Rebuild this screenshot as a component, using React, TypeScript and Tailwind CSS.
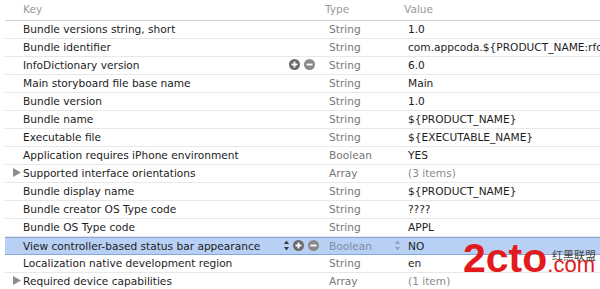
import React from 'react';

type Row = {
  key: string;
  type: string;
  value: string;
  expandable?: boolean;
  buttons?: boolean;
  selected?: boolean;
  muted?: boolean;
};

const rows: Row[] = [
  { key: 'Bundle versions string, short', type: 'String', value: '1.0' },
  { key: 'Bundle identifier', type: 'String', value: 'com.appcoda.${PRODUCT_NAME:rfc1034identifier}' },
  { key: 'InfoDictionary version', type: 'String', value: '6.0', buttons: true },
  { key: 'Main storyboard file base name', type: 'String', value: 'Main' },
  { key: 'Bundle version', type: 'String', value: '1.0' },
  { key: 'Bundle name', type: 'String', value: '${PRODUCT_NAME}' },
  { key: 'Executable file', type: 'String', value: '${EXECUTABLE_NAME}' },
  { key: 'Application requires iPhone environment', type: 'Boolean', value: 'YES' },
  { key: 'Supported interface orientations', type: 'Array', value: '(3 items)', expandable: true, muted: true },
  { key: 'Bundle display name', type: 'String', value: '${PRODUCT_NAME}' },
  { key: 'Bundle creator OS Type code', type: 'String', value: '????' },
  { key: 'Bundle OS Type code', type: 'String', value: 'APPL' },
  { key: 'View controller-based status bar appearance', type: 'Boolean', value: 'NO', selected: true },
  { key: 'Localization native development region', type: 'String', value: 'en' },
  { key: 'Required device capabilities', type: 'Array', value: '(1 item)', expandable: true, muted: true },
];

// round grey add / remove buttons
function RoundBtn({ minus }: { minus?: boolean }) {
  return (
    <svg width="11" height="11" viewBox="0 0 11 11">
      <circle cx="5.5" cy="5.5" r="5.5" fill={minus ? '#8a8a8a' : '#6a6a6a'} />
      <rect x="2.5" y="4.6" width="6" height="1.8" fill="#fff" />
      {!minus && <rect x="4.6" y="2.5" width="1.8" height="6" fill="#fff" />}
    </svg>
  );
}

function Stepper({ color = '#3a3a3a' }: { color?: string }) {
  return (
    <svg width="5" height="11" viewBox="0 0 5 11">
      <path d="M2.5 0.5 L5 4 L0 4 Z" fill={color} />
      <path d="M2.5 10.5 L5 7 L0 7 Z" fill={color} />
    </svg>
  );
}

function Triangle() {
  return (
    <svg width="8" height="9" viewBox="0 0 8 9">
      <path d="M0 0 L8 4.5 L0 9 Z" fill="#8c8c8c" />
    </svg>
  );
}

export default function App() {
  return (
    <div
      className="relative w-[600px] h-[289px] overflow-hidden bg-white text-[10.6px] text-[#1c1c1c]"
      style={{ fontFamily: '"DejaVu Sans", sans-serif' }}
    >
      {/* column header */}
      <div className="flex h-[21px] ml-[5px] items-center border-b border-[#cfcfcf] text-[#9a9a9a]">
        <div className="w-[319px] pl-[18px]">Key</div>
        <div className="w-[79px] pl-[1px]">Type</div>
        <div className="flex-1 pl-[1px]">Value</div>
      </div>

      {rows.map((r) => (
        <div
          key={r.key}
          className={`flex h-[18px] ml-[5px] pt-[1px] items-center whitespace-nowrap ${
            r.selected ? 'bg-[#b7d0f4] border-y border-[#86a8d6]' : 'border-b border-[#e8e8e8]'
          }`}
        >
          <div className="relative w-[319px] pl-[18px] flex items-center">
            {r.expandable && (
              <span className="absolute left-[8px] top-[2px]">
                <Triangle />
              </span>
            )}
            <span>{r.key}</span>
            {r.buttons && (
              <span className="absolute right-[9px] top-[1px] flex gap-[4px]">
                <RoundBtn />
                <RoundBtn minus />
              </span>
            )}
            {r.selected && (
              <span className="absolute right-[5px] top-[1px] flex items-center gap-[4px]">
                <Stepper />
                <RoundBtn />
                <RoundBtn minus />
              </span>
            )}
          </div>
          <div className={`relative w-[79px] pl-[5px] ${r.selected ? 'text-[#7f8da3]' : 'text-[#777777]'}`}>
            {r.type}
            {r.selected && (
              <span className="absolute right-[3px] top-[1px]">
                <Stepper color="#8ea3c2" />
              </span>
            )}
          </div>
          <div className={`flex-1 pl-[5px] overflow-hidden ${r.muted ? 'text-[#8a8a8a]' : ''}`}>{r.value}</div>
        </div>
      ))}

      {/* site watermark */}
      <div
        className="absolute left-[463px] top-[238px] flex items-baseline pointer-events-none text-[#e3191c]"
        style={{ fontFamily: '"Liberation Sans", sans-serif' }}
      >
        <span className="text-[41px] leading-[41px] font-bold">2cto</span>
        <span className="text-[22px] leading-[22px]">.com</span>
      </div>
      <span
        className="absolute left-[552px] top-[249px] text-[11px] leading-[12px] text-[#444] pointer-events-none"
        style={{ fontFamily: '"Noto Sans CJK SC", sans-serif' }}
      >
        红黑联盟
      </span>
    </div>
  );
}
